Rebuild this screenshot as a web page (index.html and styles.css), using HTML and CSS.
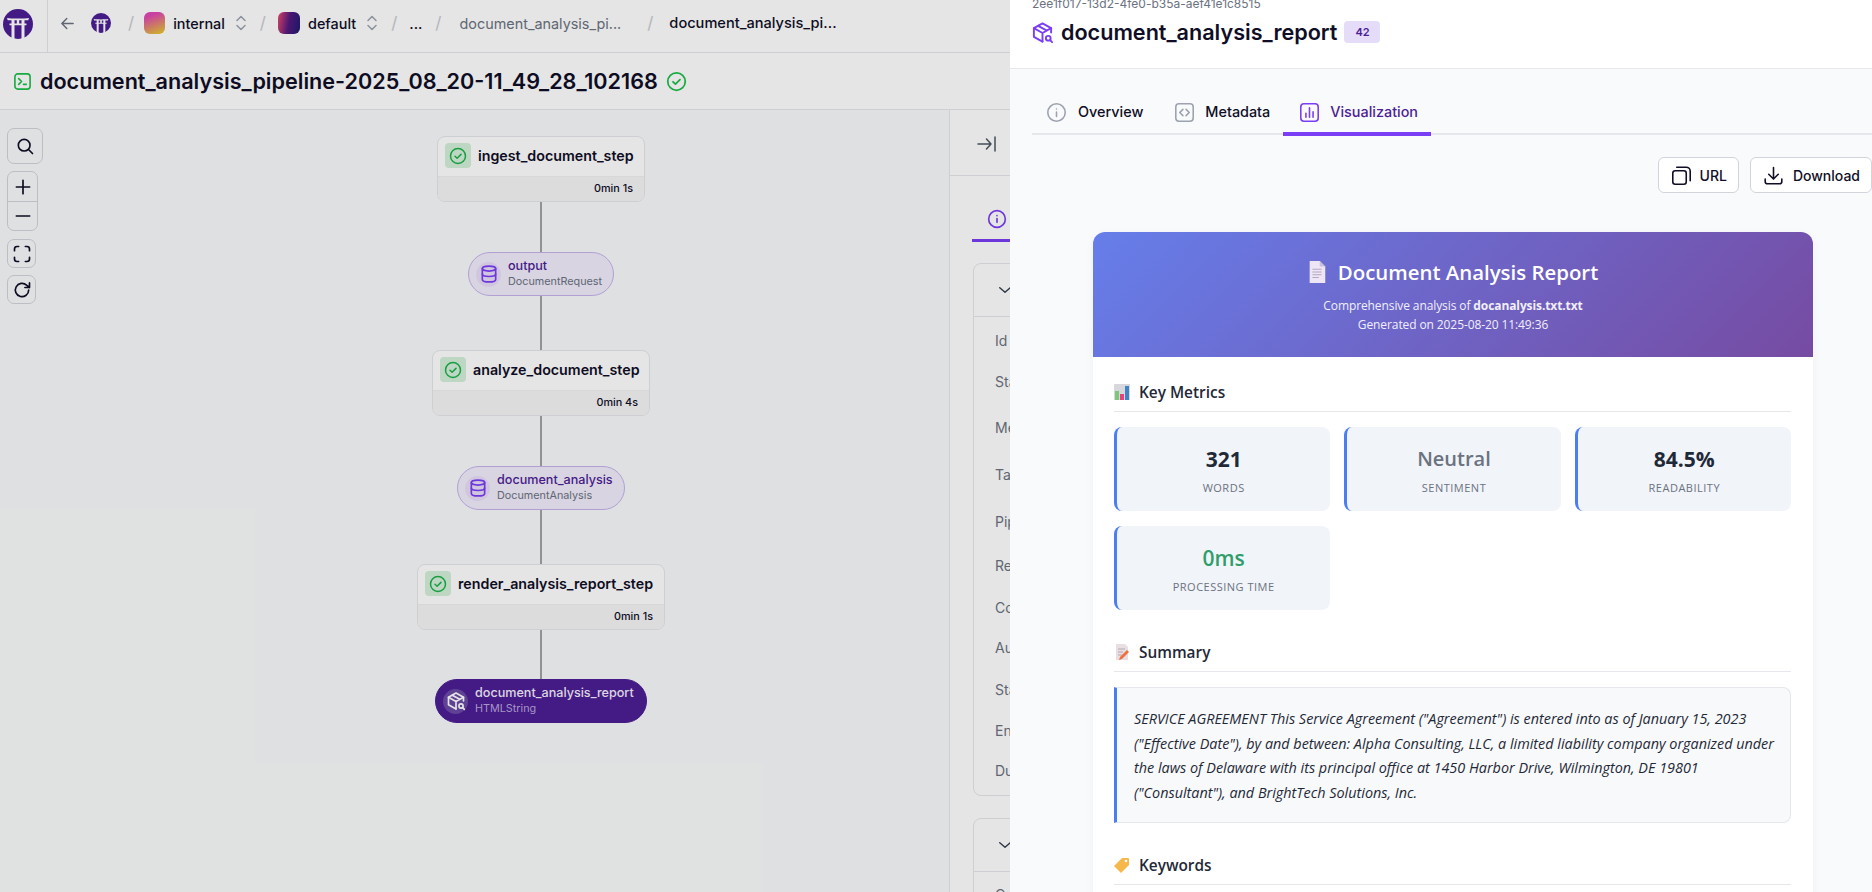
FILE: index.html

```html
<!DOCTYPE html>
<html lang="en">
<head>
  <meta charset="UTF-8" />
  <title>document_analysis_pipeline run</title>
  <link rel="stylesheet" href="styles.css">
</head>
<body>

<svg class="defs" width="0" height="0">
  <symbol id="torii" viewBox="0 0 30 30">
    <circle cx="15" cy="15" r="15" fill="#4c1d95"/>
    <path d="M4 9c4 .8 18 .8 22 0l-.7 2.300H4.700zM6.500 14.500h17v1.800h-17zM8.500 11h3v19h-3zM18.500 11h3v19h-3zM13.800 11h2.400v3.500h-2.400z" fill="#fff"/>
  </symbol>
  <symbol id="check" viewBox="0 0 24 24">
    <circle cx="12" cy="12" r="10" fill="none" stroke="currentColor" stroke-width="2"/>
    <path d="M8 12.300l2.800 2.700L16 9.800" fill="none" stroke="currentColor" stroke-width="2" stroke-linecap="round" stroke-linejoin="round"/>
  </symbol>
  <symbol id="db" viewBox="0 0 24 24">
    <g fill="none" stroke="currentColor" stroke-width="2" stroke-linecap="round" stroke-linejoin="round">
      <ellipse cx="12" cy="5.500" rx="8" ry="3"/>
      <path d="M4 5.500v13c0 1.700 3.600 3 8 3s8-1.300 8-3v-13"/>
      <path d="M4 12c0 1.700 3.600 3 8 3s8-1.300 8-3"/>
    </g>
  </symbol>
  <symbol id="box" viewBox="0 0 24 24">
    <g fill="none" stroke="currentColor" stroke-width="2" stroke-linecap="round" stroke-linejoin="round">
      <path d="M21 12V7.500L12 2.500 3 7.500v9l9 5"/>
      <path d="M3 7.500l9 5 9-5M12 12.500v9M7.500 5l9 5"/>
      <circle cx="18" cy="18" r="2.500"/>
      <path d="M20 20l2 2"/>
    </g>
  </symbol>
</svg>

<div class="page">
  <header class="topbar">
    <div class="logo-cell"><svg class="logo"><use href="#torii"/></svg></div>
    <nav class="crumbs">
      <svg class="back" viewBox="0 0 24 24" fill="none" stroke="currentColor" stroke-width="2" stroke-linecap="round" stroke-linejoin="round"><path d="M20 12H4M11 5l-7 7 7 7"/></svg>
      <svg class="logo-small"><use href="#torii"/></svg>
      <span class="slash slash-first">/</span>
      <span class="avatar avatar-internal"></span>
      <span class="crumb">internal</span>
      <svg class="updown" viewBox="0 0 12 18" fill="none" stroke="currentColor" stroke-width="1.5" stroke-linecap="round" stroke-linejoin="round"><path d="M2 6.500l4-4 4 4M2 11.500l4 4 4-4"/></svg>
      <span class="slash">/</span>
      <span class="avatar avatar-default"></span>
      <span class="crumb">default</span>
      <svg class="updown" viewBox="0 0 12 18" fill="none" stroke="currentColor" stroke-width="1.5" stroke-linecap="round" stroke-linejoin="round"><path d="M2 6.500l4-4 4 4M2 11.500l4 4 4-4"/></svg>
      <span class="slash">/</span>
      <span class="crumb">...</span>
      <span class="slash slash-gap">/</span>
      <span class="crumb crumb-muted">document_analysis_pi...</span>
      <span class="slash slash-wide">/</span>
      <span class="crumb crumb-current">document_analysis_pi...</span>
    </nav>
  </header>

  <div class="subbar">
    <svg class="run-icon" viewBox="0 0 20 20" fill="none" stroke="currentColor" stroke-width="1.7" stroke-linecap="round" stroke-linejoin="round"><rect x="2" y="2" width="16" height="16" rx="3"/><path d="M6 7l3 3-3 3M11 13h3"/></svg>
    <h1>document_analysis_pipeline-2025_08_20-11_49_28_102168</h1>
    <svg class="run-check"><use href="#check"/></svg>
  </div>

  <main class="content">
    <section class="canvas">
      <div class="tools">
        <button class="tool tool-search"><svg viewBox="0 0 24 24" fill="none" stroke="currentColor" stroke-width="2" stroke-linecap="round"><circle cx="11" cy="11" r="7"/><path d="M16.500 16.500L21 21"/></svg></button>
        <div class="tool-group">
          <button class="tool-part"><svg viewBox="0 0 24 24" fill="none" stroke="currentColor" stroke-width="2" stroke-linecap="round"><path d="M12 4v16M4 12h16"/></svg></button>
          <button class="tool-part"><svg viewBox="0 0 24 24" fill="none" stroke="currentColor" stroke-width="2" stroke-linecap="round"><path d="M4 12h16"/></svg></button>
        </div>
        <button class="tool"><svg viewBox="0 0 24 24" fill="none" stroke="currentColor" stroke-width="2" stroke-linecap="round" stroke-linejoin="round"><path d="M3 8V6a3 3 0 0 1 3-3h2M16 3h2a3 3 0 0 1 3 3v2M21 16v2a3 3 0 0 1-3 3h-2M8 21H6a3 3 0 0 1-3-3v-2"/></svg></button>
        <button class="tool"><svg viewBox="0 0 24 24" fill="none" stroke="currentColor" stroke-width="2" stroke-linecap="round" stroke-linejoin="round"><path d="M20 12a8 8 0 1 1-2.500-5.800L21 9M21 3.500V9h-5.500"/></svg></button>
      </div>

      <div class="edge edge-1"></div>
      <div class="edge edge-2"></div>
      <div class="edge edge-3"></div>
      <div class="edge edge-4"></div>
      <div class="edge edge-5"></div>

      <div class="step step-1">
        <div class="step-head"><span class="step-icon"><svg><use href="#check"/></svg></span><b>ingest_document_step</b></div>
        <div class="step-foot">0min 1s</div>
      </div>
      <div class="pill pill-1">
        <span class="pill-icon"><svg><use href="#db"/></svg></span>
        <div><div class="pill-name">output</div><div class="pill-type">DocumentRequest</div></div>
      </div>
      <div class="step step-2">
        <div class="step-head"><span class="step-icon"><svg><use href="#check"/></svg></span><b>analyze_document_step</b></div>
        <div class="step-foot">0min 4s</div>
      </div>
      <div class="pill pill-2">
        <span class="pill-icon"><svg><use href="#db"/></svg></span>
        <div><div class="pill-name">document_analysis</div><div class="pill-type">DocumentAnalysis</div></div>
      </div>
      <div class="step step-3">
        <div class="step-head"><span class="step-icon"><svg><use href="#check"/></svg></span><b>render_analysis_report_step</b></div>
        <div class="step-foot">0min 1s</div>
      </div>
      <div class="pill pill-3 pill-dark">
        <span class="pill-icon"><svg><use href="#box"/></svg></span>
        <div><div class="pill-name">document_analysis_report</div><div class="pill-type">HTMLString</div></div>
      </div>
    </section>

    <aside class="sidebar">
      <div class="side-head">
        <svg class="collapse" viewBox="0 0 20 20" fill="none" stroke="currentColor" stroke-width="1.5" stroke-linecap="round" stroke-linejoin="round"><path d="M1 10h13M9.500 5l4.500 5-4.500 5M18 3v14"/></svg>
      </div>
      <div class="side-tabs">
        <div class="side-tab"><svg viewBox="0 0 24 24" fill="none" stroke="currentColor" stroke-width="2" stroke-linecap="round"><circle cx="12" cy="12" r="10"/><path d="M12 11.500V16M12 8v.1"/></svg><span>Overview</span></div>
      </div>
      <div class="side-card">
        <div class="side-card-head"><svg viewBox="0 0 24 24" fill="none" stroke="currentColor" stroke-width="2" stroke-linecap="round" stroke-linejoin="round"><path d="M5 9l7 6 7-6"/></svg><span>Details</span></div>
        <div class="side-rows">
          <div>Id</div><div>Status</div><div>Message</div><div>Tags</div><div>Pipeline</div><div>Repository</div><div>Code Path</div><div>Author</div><div>Start Time</div><div>End Time</div><div>Duration</div>
        </div>
      </div>
      <div class="side-card side-card-next">
        <div class="side-card-head"><svg viewBox="0 0 24 24" fill="none" stroke="currentColor" stroke-width="2" stroke-linecap="round" stroke-linejoin="round"><path d="M5 9l7 6 7-6"/></svg><span>Config</span></div>
        <div class="side-rows-next"><div>Code</div></div>
      </div>
    </aside>
  </main>
</div>

<div class="dim"></div>

<div class="drawer">
  <div class="drawer-head">
    <div class="uuid">2ee1f017-13d2-4fe0-b35a-aef41e1c8515</div>
    <div class="artifact">
      <svg class="artifact-icon"><use href="#box"/></svg>
      <h2>document_analysis_report</h2>
      <span class="badge">42</span>
    </div>
  </div>

  <div class="drawer-body">
    <div class="tabs">
      <div class="tab"><svg class="tab-icon" viewBox="0 0 24 24" fill="none" stroke="currentColor" stroke-width="2" stroke-linecap="round"><circle cx="12" cy="12" r="11"/><path d="M12 11.500V17M12 7.500v.1"/></svg>Overview</div>
      <div class="tab tab-tight"><svg class="tab-icon" viewBox="0 0 24 24" fill="none" stroke="currentColor" stroke-width="2" stroke-linecap="round" stroke-linejoin="round"><rect x="1" y="1" width="22" height="22" rx="4"/><path d="M10 8l-4 4 4 4M14 8l4 4-4 4"/></svg>Metadata</div>
      <div class="tab tab-tight tab-active"><svg class="tab-icon" viewBox="0 0 24 24" fill="none" stroke="currentColor" stroke-width="2" stroke-linecap="round" stroke-linejoin="round"><rect x="1" y="1" width="22" height="22" rx="4"/><path d="M7.500 18v-5M12 18V6M16.500 18v-7"/></svg>Visualization</div>
    </div>

    <div class="actions">
      <button class="action action-url"><svg viewBox="0 0 24 24" fill="none" stroke="currentColor" stroke-width="2" stroke-linecap="round" stroke-linejoin="round"><rect x="1" y="6" width="17" height="17" rx="3"/><path d="M6 1.500h12a5 5 0 0 1 5 5v12"/></svg>URL</button>
      <button class="action"><svg viewBox="0 0 24 24" fill="none" stroke="currentColor" stroke-width="2" stroke-linecap="round" stroke-linejoin="round"><path d="M12 2v14M6 10.500l6 6 6-6M1.500 16.500v3a3 3 0 0 0 3 3h15a3 3 0 0 0 3-3v-3"/></svg>Download</button>
    </div>

    <article class="report">
      <header class="report-head">
        <div class="report-title">
          <svg class="emoji-doc" viewBox="0 0 18 24"><path d="M1 0h11l6 6v18H1z" fill="#eee6f6"/><path d="M12 0l6 6h-6z" fill="#c9c2d6"/><path d="M4 9h10M4 12h10M4 15h10M4 18h7" stroke="#a9a3b8" stroke-width="1"/></svg>
          <span>Document Analysis Report</span>
        </div>
        <p>Comprehensive analysis of <strong>docanalysis.txt.txt</strong></p>
        <p>Generated on 2025-08-20 11:49:36</p>
      </header>

      <div class="report-body">
        <h3>
          <svg class="emoji" viewBox="0 0 16 16"><rect width="16" height="16" fill="#d8d8dc"/><rect x="1" y="7" width="4" height="9" fill="#7ec77a"/><rect x="6" y="10" width="4" height="6" fill="#e0457b"/><rect x="11" y="2" width="4" height="14" fill="#3f83c8"/></svg>
          Key Metrics
        </h3>
        <div class="metrics">
          <div class="metric"><div class="metric-value">321</div><div class="metric-label">Words</div></div>
          <div class="metric"><div class="metric-value value-neutral">Neutral</div><div class="metric-label">Sentiment</div></div>
          <div class="metric"><div class="metric-value">84.5%</div><div class="metric-label">Readability</div></div>
          <div class="metric"><div class="metric-value value-good">0ms</div><div class="metric-label">Processing Time</div></div>
        </div>

        <h3 class="h-summary">
          <svg class="emoji" viewBox="0 0 16 16"><path d="M2 0h9l3 3v13H2z" fill="#e8dfe4"/><path d="M4 5h7M4 8h5M4 11h4" stroke="#b8a8b0"/><path d="M6 13l7-7 2 2-7 7-3 1z" fill="#f0703a"/></svg>
          Summary
        </h3>
        <blockquote class="summary">SERVICE AGREEMENT This Service Agreement ("Agreement") is entered into as of January 15, 2023 ("Effective Date"), by and between: Alpha Consulting, LLC, a limited liability company organized under the laws of Delaware with its principal office at 1450 Harbor Drive, Wilmington, DE 19801 ("Consultant"), and BrightTech Solutions, Inc.</blockquote>

        <h3 class="h-keywords">
          <svg class="emoji" viewBox="0 0 16 16"><path d="M8 1h6a1 1 0 0 1 1 1v6l-8 8-7-7z" fill="#f6b84b"/><circle cx="12" cy="4" r="1.300" fill="#fff"/></svg>
          Keywords
        </h3>
      </div>
    </article>
  </div>
</div>

</body>
</html>
```

FILE: styles.css

```css
* {
  box-sizing: border-box;
}
html, body {
  margin: 0;
  height: 100%;
  overflow: hidden;
}
body {
  font-family: Inter, "Noto Sans", sans-serif;
  background: #f9fafb;
  color: #0f0e26;
}
.defs {
  position: absolute;
}
button {
  font-family: inherit;
  color: inherit;
  padding: 0;
  cursor: pointer;
}

.page {
  height: 892px;
  display: flex;
  flex-direction: column;
}

/* top bar */
.topbar {
  height: 53px;
  display: flex;
  background: #fff;
  border-bottom: 1px solid #e5e7eb;
}
.logo-cell {
  width: 48px;
  padding: 9px 0 0 3px;
  border-right: 1px solid #e5e7eb;
}
.logo {
  width: 30px;
  height: 30px;
}
.crumbs {
  display: flex;
  align-items: center;
  height: 46px;
  padding-left: 11px;
  font-size: 14.4px;
  font-weight: 500;
}
.back {
  width: 17px;
  height: 17px;
  color: #6b7280;
}
.logo-small {
  width: 20px;
  height: 20px;
  margin: 0 4px 0 15px;
}
.slash {
  color: #c9cbd1;
  font-size: 17px;
  font-weight: 400;
  margin: 0 12px 0 13px;
}
.slash-first {
  margin-right: 10px;
}
.slash-gap {
  margin-right: 18px;
}
.slash-wide {
  margin: 0 16px 0 26px;
}
.avatar {
  width: 21px;
  height: 22px;
  border-radius: 6px;
  margin-right: 8px;
}
.avatar-internal {
  background: linear-gradient(160deg, #e048b4 20%, #e6c72f 95%);
}
.avatar-default {
  width: 22px;
  background: linear-gradient(100deg, #e8486f 0%, #52197f 50%, #1e1b6e 100%);
}
.crumb-muted {
  color: #6b7280;
  font-weight: 400;
}
.crumb-current {
  font-size: 14.6px;
}
.updown {
  width: 12px;
  height: 18px;
  margin-left: 10px;
  color: #9ca3af;
}

/* run title */
.subbar {
  height: 57px;
  display: flex;
  align-items: center;
  padding-left: 13px;
  background: #fff;
  border-bottom: 1px solid #e5e7eb;
}
.run-icon {
  width: 19px;
  height: 19px;
  color: #1cbf4a;
}
.subbar h1 {
  margin: 0 8px 0 8px;
  font-size: 21.6px;
  line-height: 28px;
  font-weight: 600;
}
.run-check {
  width: 21px;
  height: 21px;
  color: #1cbf4a;
}

.content {
  flex: 1;
  display: flex;
  min-height: 0;
}

/* dag canvas */
.canvas {
  position: relative;
  flex: 0 0 949px;
  background: #f9fafb;
}
.tools {
  position: absolute;
  left: 7px;
  top: 18px;
  display: flex;
  flex-direction: column;
  align-items: flex-start;
  gap: 7px;
}
.tool {
  width: 29px;
  height: 29px;
  display: flex;
  align-items: center;
  justify-content: center;
  background: #f9fafb;
  border: 1px solid #d1d5db;
  border-radius: 7px;
}
.tool svg, .tool-part svg {
  width: 20px;
  height: 20px;
}
.tool-search {
  width: 36px;
  height: 36px;
}
.tool-group {
  width: 31px;
  margin-bottom: 1px;
  border: 1px solid #d1d5db;
  border-radius: 7px;
}
.tool-part {
  display: flex;
  align-items: center;
  justify-content: center;
  width: 100%;
  height: 29px;
  background: none;
  border: 0;
}
.tool-part + .tool-part {
  border-top: 1px solid #d1d5db;
}

.edge {
  position: absolute;
  left: 540px;
  width: 2px;
  background: #a3a3a6;
}
.edge-1 { top: 91px; height: 51px; }
.edge-2 { top: 186px; height: 54px; }
.edge-3 { top: 304px; height: 52px; }
.edge-4 { top: 399px; height: 55px; }
.edge-5 { top: 519px; height: 50px; }

.step {
  position: absolute;
  background: #fff;
  border: 1px solid #e5e7eb;
  border-radius: 8px;
  overflow: hidden;
}
.step-1 { left: 437px; top: 26px; width: 208px; }
.step-2 { left: 432px; top: 240px; width: 218px; }
.step-3 { left: 417px; top: 454px; width: 248px; }
.step-head {
  height: 39px;
  display: flex;
  align-items: center;
  padding: 0 0 2px 7px;
  font-size: 14.25px;
}
.step-head b {
  font-weight: 600;
  margin-left: 7px;
}
.step-icon {
  width: 26px;
  height: 25px;
  display: flex;
  align-items: center;
  justify-content: center;
  background: #d3f0da;
  border-radius: 4px;
  color: #1cb04a;
}
.step-icon svg {
  width: 18px;
  height: 18px;
}
.step-foot {
  height: 25px;
  padding-right: 11px;
  text-align: right;
  font-size: 10.8px;
  line-height: 23px;
  font-weight: 500;
  background: #f5f5f6;
  border-top: 1px solid #f0f0f2;
}

.pill {
  position: absolute;
  height: 44px;
  display: flex;
  align-items: center;
  gap: 7px;
  padding-left: 7px;
  background: #f1ecfc;
  border: 1px solid #c7b3ee;
  border-radius: 22px;
}
.pill-1 { left: 468px; top: 142px; width: 146px; }
.pill-2 { left: 457px; top: 356px; width: 168px; }
.pill-3 { left: 435px; top: 569px; width: 212px; }
.pill-icon {
  width: 25px;
  height: 25px;
  display: flex;
  align-items: center;
  justify-content: center;
  border-radius: 50%;
  background: #e8def9;
  color: #7a3ef4;
}
.pill-icon svg {
  width: 20px;
  height: 20px;
}
.pill-name {
  font-size: 12.6px;
  line-height: 16px;
  font-weight: 500;
  color: #4c1d95;
}
.pill-type {
  font-size: 10.8px;
  line-height: 16px;
  color: #6b7280;
}
.pill-dark {
  background: #4c1d95;
  border-color: #4c1d95;
}
.pill-dark .pill-icon {
  background: #6b4aa6;
  color: #fff;
}
.pill-dark .pill-name {
  color: #f3effc;
}
.pill-dark .pill-type {
  color: #b9a7dd;
}

/* run sidebar, mostly behind the drawer */
.sidebar {
  flex: 1;
  background: #fff;
  border-left: 1px solid #e5e7eb;
  overflow: hidden;
}
.side-head {
  height: 66px;
  padding: 24px 0 0 27px;
  border-bottom: 1px solid #e5e7eb;
}
.collapse {
  width: 20px;
  height: 20px;
  color: #4b5563;
}
.side-tabs {
  height: 66px;
  margin-left: 22px;
  padding-top: 33px;
  border-bottom: 0;
}
.side-tab {
  display: flex;
  gap: 8px;
  height: 33px;
  padding-left: 15px;
  border-bottom: 3px solid #7a3ef4;
  font-size: 14px;
}
.side-tab svg {
  width: 20px;
  height: 20px;
  color: #7a3ef4;
}
.side-card {
  margin: 21px 0 0 23px;
  background: #fff;
  border: 1px solid #e5e7eb;
  border-radius: 8px;
  font-size: 14px;
  color: #6b7280;
}
.side-card-head {
  height: 53px;
  display: flex;
  align-items: center;
  gap: 8px;
  padding-left: 22px;
  border-bottom: 1px solid #e5e7eb;
}
.side-card-head svg {
  width: 18px;
  height: 18px;
  color: #374151;
}
.side-rows {
  display: grid;
  grid-template-rows: 39px 43px 48px 47px 46px 43px 40px 40px 44px 39px 40px;
  align-items: center;
  padding: 4px 0 5px 21px;
}
.side-card-next {
  margin-top: 22px;
}
.side-rows-next {
  padding: 14px 0 0 21px;
}

/* modal shade */
.dim {
  position: absolute;
  left: 0;
  top: 0;
  width: 1010px;
  height: 892px;
  background: rgba(0, 0, 0, 0.1);
}

/* artifact drawer */
.drawer {
  position: absolute;
  left: 1010px;
  top: 0;
  width: 862px;
  height: 892px;
  overflow: hidden;
  background: #f9fafb;
}
.drawer-head {
  display: flow-root;
  height: 69px;
  padding-left: 22px;
  background: #fff;
  border-bottom: 1px solid #e5e7eb;
}
.uuid {
  margin-top: -4px;
  font-size: 12px;
  line-height: 16px;
  color: #6b7280;
}
.artifact {
  display: flex;
  align-items: center;
  margin-top: 5px;
  height: 30px;
}
.artifact-icon {
  width: 23px;
  height: 23px;
  margin-left: -1px;
  color: #7a3ef4;
}
.artifact h2 {
  margin: 0 7px 0 7px;
  font-size: 21.6px;
  font-weight: 600;
}
.badge {
  width: 36px;
  height: 22px;
  text-align: center;
  font-size: 11px;
  line-height: 22px;
  font-weight: 600;
  color: #4c1d95;
  background: #e4dcf9;
  border-radius: 4px;
}

.tabs {
  height: 66px;
  margin-left: 22px;
  padding: 22px 0 0 15px;
  display: flex;
  border-bottom: 2px solid #e5e7eb;
}
.tab {
  display: flex;
  gap: 12px;
  height: 45px;
  font-size: 14.4px;
  line-height: 20px;
  font-weight: 500;
  padding: 11px 0 0 0;
  margin-right: 32px;
}
.tab-tight {
  gap: 11px;
}
.tab-icon {
  width: 19px;
  height: 19px;
  margin-top: 1px;
  color: #9ca3af;
}
.tab-active {
  margin-left: -19px;
  padding: 11px 13px 0 17px;
  color: #4c1d95;
  border-bottom: 4px solid #7a3ef4;
}
.tab-active .tab-icon {
  color: #7a3ef4;
}

.actions {
  display: flex;
  justify-content: flex-end;
  gap: 11px;
  margin-top: 22px;
}
.action {
  height: 36px;
  display: flex;
  align-items: center;
  gap: 10px;
  padding: 0 11px 0 13px;
  background: #fff;
  border: 1px solid #d1d5db;
  border-radius: 6px;
  font-size: 14px;
  font-weight: 500;
}
.action svg {
  width: 19px;
  height: 19px;
}
.action-url {
  padding-left: 13px;
  gap: 9px;
}

/* the rendered html report */
.report {
  width: 720px;
  min-height: 700px;
  margin: 39px 0 0 83px;
  font-family: "Open Sans", "Noto Sans", sans-serif;
  background: #fff;
  border-radius: 12px 12px 0 0;
  box-shadow: 0 2px 10px rgba(0, 0, 0, 0.04);
  color: #1f2937;
}
.report-head {
  height: 125px;
  padding-top: 24px;
  text-align: center;
  color: #fff;
  background: linear-gradient(135deg, #667eea 0%, #764ba2 100%);
  border-radius: 12px 12px 0 0;
}
.report-title {
  display: flex;
  align-items: center;
  justify-content: center;
  gap: 12px;
  font-size: 20.4px;
  font-weight: 600;
  line-height: 32px;
  margin-bottom: 8px;
}
.emoji-doc {
  width: 18px;
  height: 22px;
}
.report-head p {
  margin: 0;
  font-size: 12px;
  letter-spacing: -0.1px;
  line-height: 19px;
  opacity: 0.9;
}
.report-body {
  padding: 0 22px 0 21px;
}
.report-body h3 {
  display: flex;
  align-items: center;
  gap: 9px;
  margin: 0;
  height: 55px;
  padding-top: 16px;
  font-size: 15.4px;
  font-weight: 600;
  border-bottom: 1px solid #e5e7eb;
}
.emoji {
  width: 16px;
  height: 16px;
}
.metrics {
  display: grid;
  grid-template-columns: repeat(3, 1fr);
  gap: 15px 14px;
  margin-top: 15px;
}
.metric {
  height: 84px;
  padding-top: 17px;
  text-align: center;
  background: #f1f4f9;
  border-left: 3px solid #4c7ef3;
  border-radius: 8px;
}
.metric-value {
  font-size: 21px;
  line-height: 30px;
  font-weight: 700;
}
.value-neutral {
  font-size: 20px;
  font-weight: 600;
  color: #6b7280;
}
.value-good {
  font-weight: 600;
  color: #2f9e6b;
}
.metric-label {
  margin-top: 6px;
  font-size: 11px;
  line-height: 16px;
  letter-spacing: 0.5px;
  text-transform: uppercase;
  color: #6b7280;
}
.report-body .h-summary {
  margin-top: 7px;
}
.summary {
  margin: 15px 0 0;
  height: 136px;
  padding: 19px 8px 0 17px;
  font-size: 14.4px;
  line-height: 24.6px;
  font-style: italic;
  background: #f8f9fb;
  border: 1px solid #e5e7eb;
  border-left: 3px solid #4c7ef3;
  border-radius: 0 8px 8px 0;
}
.report-body .h-keywords {
  margin-top: 7px;
}
```
